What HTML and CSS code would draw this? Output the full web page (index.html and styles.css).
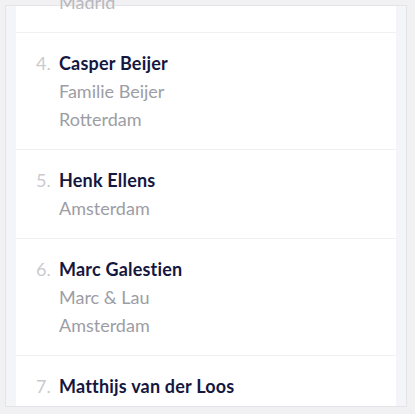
FILE: index.html
```html
<!DOCTYPE html>
<html lang="nl">
<head>
<meta charset="utf-8">
<link rel="stylesheet" href="styles.css">
</head>
<body>
<div class="frame">
  <ol class="list">
    <li class="item">
      <span class="num">3.</span>
      <div class="info">
        <div class="name">Placeholder</div>
        <div class="sub">Madrid</div>
      </div>
    </li>
    <li class="item">
      <span class="num">4.</span>
      <div class="info">
        <div class="name">Casper Beijer</div>
        <div class="sub">Familie Beijer</div>
        <div class="sub">Rotterdam</div>
      </div>
    </li>
    <li class="item">
      <span class="num">5.</span>
      <div class="info">
        <div class="name">Henk Ellens</div>
        <div class="sub">Amsterdam</div>
      </div>
    </li>
    <li class="item">
      <span class="num">6.</span>
      <div class="info">
        <div class="name">Marc Galestien</div>
        <div class="sub">Marc &amp; Lau</div>
        <div class="sub">Amsterdam</div>
      </div>
    </li>
    <li class="item">
      <span class="num">7.</span>
      <div class="info">
        <div class="name">Matthijs van der Loos</div>
        <div class="sub">Amsterdam</div>
      </div>
    </li>
  </ol>
</div>
</body>
</html>
```
FILE: styles.css
```css
html, body {
  margin: 0;
  padding: 0;
  background: #f1f1f3;
  font-family: Lato, "Open Sans", sans-serif;
  overflow: hidden;
}
.frame {
  margin: 5px 0 0 5px;
  width: 380px;
  height: 400px;
  border: 1px solid #e4e4e8;
  background: #f4f5f9;
  padding: 0 10px;
}
.list {
  list-style: none;
  margin: 0;
  padding: 0;
  background: #fff;
  height: 400px;
  overflow: visible;
  clip-path: inset(-12px 0 0 0);
  display: flex;
  flex-direction: column;
}
.item {
  display: flex;
  padding: 16px 20px;
  border-bottom: 1px solid #f0f0f3;
  flex-shrink: 0;
}
.item:first-child {
  margin-top: -62px;
}
.item:first-child .sub {
  color: #b8b8be;
}
.num {
  width: 23px;
  flex-shrink: 0;
  font-size: 18px;
  line-height: 28px;
  color: #cacace;
}
.info {
  display: flex;
  flex-direction: column;
}
.name {
  font-size: 18px;
  line-height: 28px;
  font-weight: 700;
  color: #15173f;
  letter-spacing: 0.2px;
}
.sub {
  font-size: 18px;
  line-height: 28px;
  color: #9d9da5;
}
```
